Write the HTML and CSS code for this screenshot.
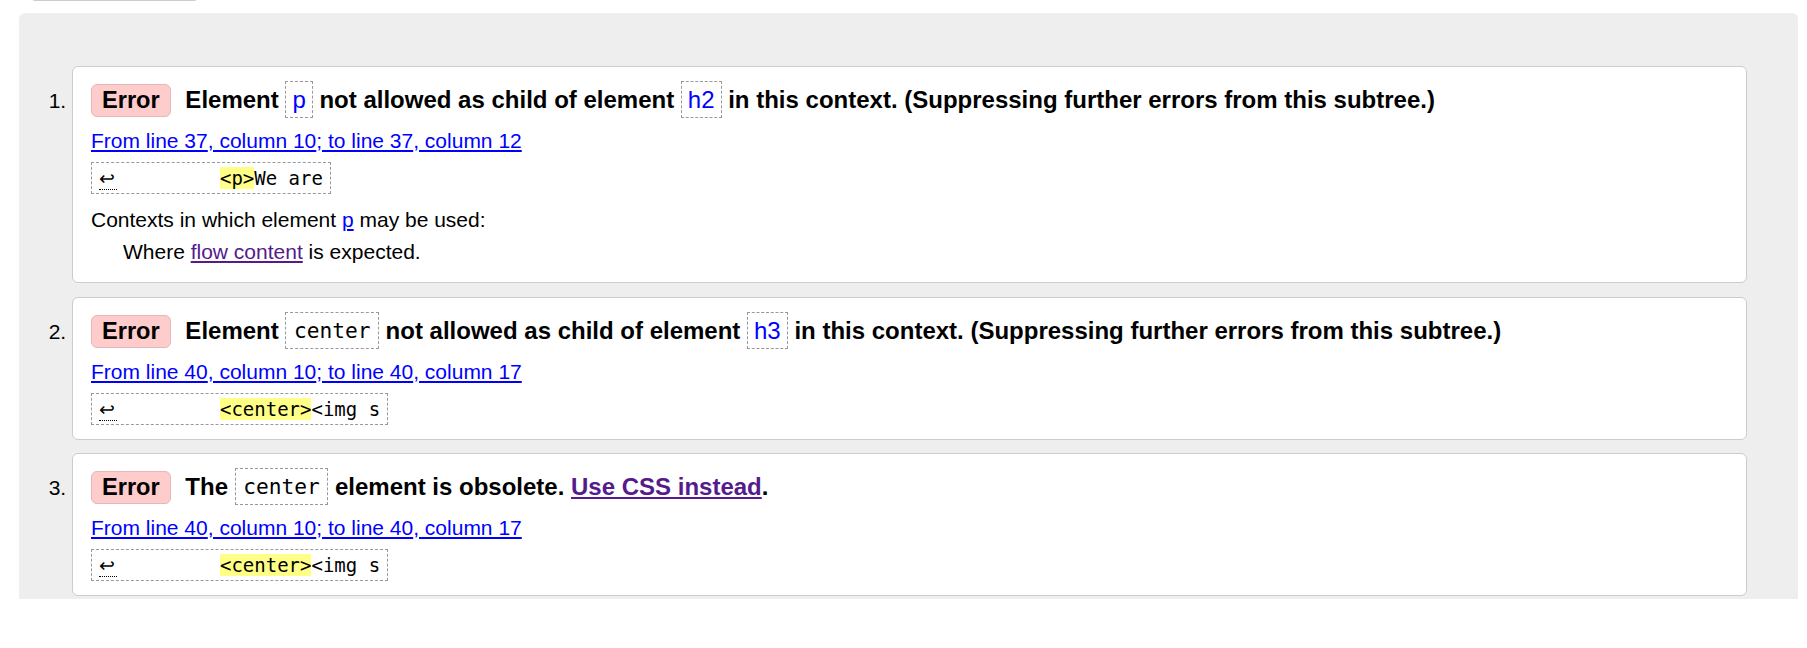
FILE: index.html
```html
<!DOCTYPE html>
<html lang="en">
<head>
<meta charset="utf-8">
<title>Validation results</title>
<link rel="stylesheet" href="styles.css">
</head>
<body>
<div class="prev"></div>
<div class="results">
<ol class="messages">
<li class="error">
<p class="msg"><strong class="badge">Error</strong> Element <a class="ref" href="#"><code>p</code></a> not allowed as child of element <a class="ref" href="#"><code>h2</code></a> in this context. (Suppressing further errors from this subtree.)</p>
<p class="location"><a href="#"><span>From line 37</span><span>, column 10</span><span>; to line 37</span><span>, column 12</span></a></p>
<p class="extract"><code><span class="lf" title="Line break">↩</span>         <b>&lt;p&gt;</b>We are</code></p>
<dl class="contexts">
<dt>Contexts in which element <a href="#">p</a> may be used:</dt>
<dd>Where <a class="visited" href="#">flow content</a> is expected.</dd>
</dl>
</li>
<li class="error">
<p class="msg"><strong class="badge">Error</strong> Element <code class="mono">center</code> not allowed as child of element <a class="ref" href="#"><code>h3</code></a> in this context. (Suppressing further errors from this subtree.)</p>
<p class="location"><a href="#"><span>From line 40</span><span>, column 10</span><span>; to line 40</span><span>, column 17</span></a></p>
<p class="extract"><code><span class="lf" title="Line break">↩</span>         <b>&lt;center&gt;</b>&lt;img s</code></p>
</li>
<li class="error">
<p class="msg"><strong class="badge">Error</strong> The <code class="mono">center</code> element is obsolete. <a class="visited" href="#">Use CSS instead</a>.</p>
<p class="location"><a href="#"><span>From line 40</span><span>, column 10</span><span>; to line 40</span><span>, column 17</span></a></p>
<p class="extract"><code><span class="lf" title="Line break">↩</span>         <b>&lt;center&gt;</b>&lt;img s</code></p>
</li>
</ol>
</div>
</body>
</html>
```

FILE: styles.css
```css
html, body {
  margin: 0;
  padding: 0;
  background: #fff;
}

body {
  font-family: "Liberation Sans", Arial, sans-serif;
  font-size: 21px;
  color: #000;
}

.prev {
  box-sizing: border-box;
  width: 169px;
  height: 30px;
  margin: -29px 0 0 30px;
  border: 1px solid #ccc;
  border-radius: 5px;
}

.results {
  margin: 12px 9px 0 19px;
  padding: 53px 51px 3px 53px;
  background: #eee;
  border-radius: 6px 6px 0 0;
}

.messages {
  margin: 0;
  padding: 0;
  list-style: decimal outside;
}

.error {
  background: #fff;
  border: 1px solid #ccc;
  border-radius: 6px;
  padding: 14px 18px 14px;
}

.error + .error {
  margin-top: 13.5px;
}

a {
  color: #00f;
  text-decoration: underline;
}

a.visited {
  color: #551a8b;
}

.msg {
  margin: 0;
  font-size: 24px;
  font-weight: bold;
  line-height: 37px;
}

.badge {
  display: inline-block;
  padding: 0 10px;
  margin-right: 8px;
  line-height: 31px;
  font-size: 23.6px;
  background: #fcc;
  border: 1px solid #e2b8b8;
  border-radius: 6px;
}

.msg code {
  display: inline-block;
  padding: 0 6px;
  line-height: 35px;
  border: 1px dashed #999;
  font-family: "Liberation Sans", Arial, sans-serif;
  font-size: 24px;
  font-weight: normal;
}

.msg code.mono {
  padding: 0 7.5px;
  vertical-align: top;
  font-family: "DejaVu Sans Mono", monospace;
  font-size: 21.2px;
  color: #000;
}

.location {
  margin: 7px 0 0;
  line-height: 32px;
}

.extract {
  margin: 5px 0 0;
  width: fit-content;
  border: 1px dashed #999;
  padding: 0 7px;
  line-height: 30px;
}

.extract code {
  vertical-align: top;
  line-height: 30px;
  font-family: "DejaVu Sans Mono", monospace;
  font-size: 19px;
  white-space: pre;
}

.extract b {
  font-weight: normal;
  background: #ff8;
}

.lf {
  display: inline-block;
  width: 18px;
  line-height: 21px;
  border-bottom: 1px dotted #000;
  font-family: "DejaVu Sans", sans-serif;
  font-size: 19px;
  font-weight: 300;
}

.contexts {
  margin: 10px 0 0;
  line-height: 32px;
}

.contexts dt {
  margin: 0;
}

.contexts dd {
  margin: 0 0 0 32px;
}
```
